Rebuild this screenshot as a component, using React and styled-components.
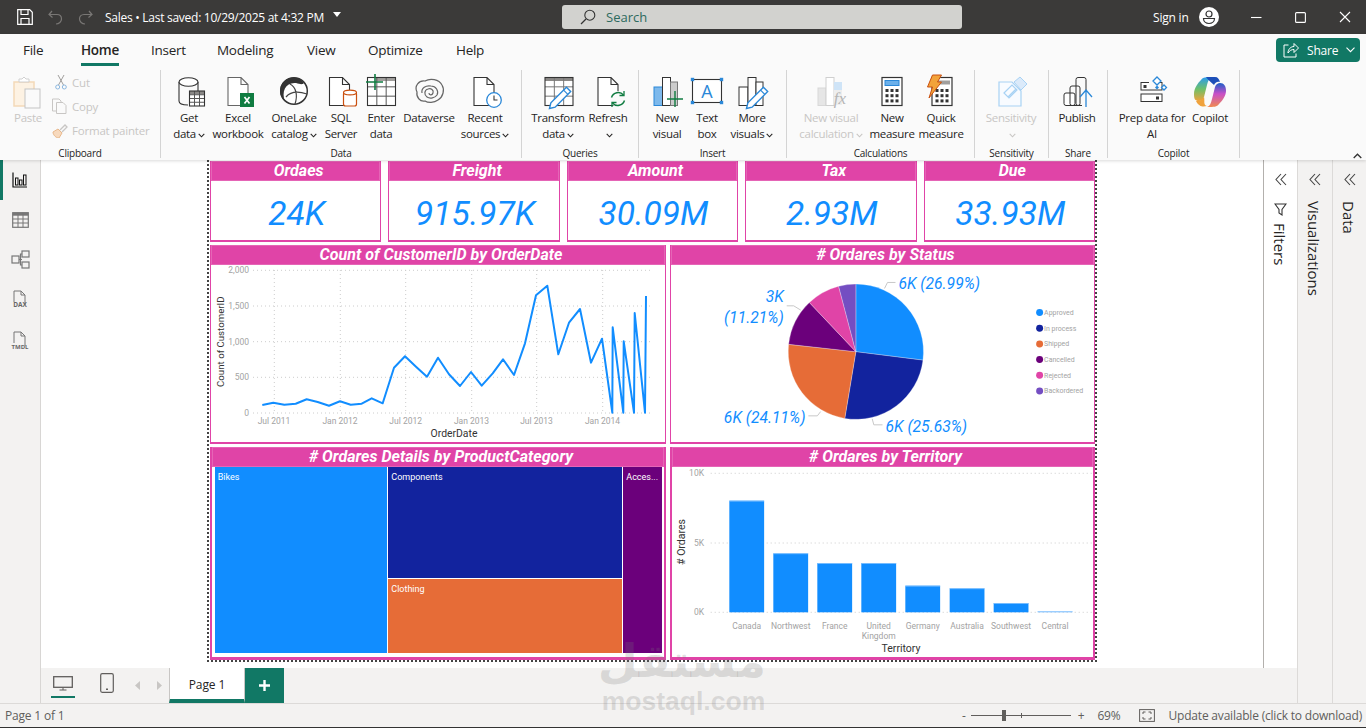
import React from 'react';
import styled, { createGlobalStyle } from 'styled-components';

const Global = createGlobalStyle`
  html, body { margin: 0; padding: 0; background: #f3f2f1; overflow: hidden; }
  * { box-sizing: border-box; }
  #root { width: 1366px; height: 728px; }
`;
const UI = `"Open Sans", "Noto Sans", sans-serif`;
const DIN = `Roboto, "Liberation Sans", sans-serif`;
const PINK = '#E044A7';
const TEAL = '#117865';

const Shell = styled.div`position: relative; width: 1366px; height: 728px; display: flex; flex-direction: column; font-family: ${UI}; overflow: hidden; background: #f3f2f1;`;
const TitleBar = styled.header`height: 34px; background: #3b3a39; display: flex; align-items: center; color: #fff; flex: none;`;
const TitleIcon = styled.svg`flex: none; margin-left: ${p => p.$ml}px; display: block;`;
const TitleText = styled.span`margin-left: 12px; width: 222px; font-size: 12px; letter-spacing: -0.27px; white-space: nowrap;`;
const Caret = styled.span`margin-left: 6px; width: 0; height: 0; border-left: 4.5px solid transparent; border-right: 4.5px solid transparent; border-top: 5px solid #fff; margin-top: -6px;`;
const SearchBox = styled.div`margin-left: 221px; width: 400px; height: 24px; background: #d2d2cf; border-radius: 3px; display: flex; align-items: center; padding-left: 18px; gap: 10px; color: #2d6a5e; font-size: 13px;`;
const SignIn = styled.span`margin-left: 191px; width: 36px; font-size: 12px; letter-spacing: -0.2px; white-space: nowrap;`;

const Ribbon = styled.section`height: 126px; background: #fafafa; flex: none; position: relative; z-index: 2; box-shadow: 0 1px 3px rgba(0,0,0,.15); padding-bottom: 2px;`;
const TabRow = styled.nav`height: 36px; display: flex; align-items: flex-start; padding: 7px 0 0 23px; position: relative;`;
const Tab = styled.span`font-size: 13.5px; letter-spacing: -0.28px; color: #252423; margin-left: ${p => p.$ml}px; height: 22px; line-height: 19px; font-weight: ${p => p.$on ? 600 : 400}; border-bottom: ${p => p.$on ? `3px solid ${TEAL}` : 'none'}; white-space: nowrap; box-sizing: content-box; width: ${p => p.$w}px; text-align: left;`;
const ShareBtn = styled.button`position: absolute; left: 1276px; top: 4px; width: 84px; height: 24px; border: 0; border-radius: 4px; background: ${TEAL}; color: #fff; font: 12px ${UI}; letter-spacing: -0.2px; display: flex; align-items: center; padding: 0 0 0 7px; gap: 8px;`;
const Groups = styled.div`display: flex; height: 88px;`;
const Group = styled.div`width: ${p => p.$w}px; flex: none; border-right: 1px solid #d4d4d4; height: 88px; margin-top: 0; display: flex; flex-direction: column; position: relative; padding-left: ${p => p.$pl}px;`;
const GroupItems = styled.div`display: flex; height: 76px;`;
const GroupLabel = styled.div`position: absolute; left: 0; right: 0; bottom: -2px; text-align: center; font-size: 10px; letter-spacing: -0.22px; color: #252423; line-height: 14px; white-space: nowrap;`;
const BigBtn = styled.div`width: ${p => p.$w}px; flex: none; display: flex; flex-direction: column; align-items: center; padding-top: 6px; color: ${p => p.$off ? '#c8c6c4' : '#252423'};`;
const BigIcon = styled.svg`width: 36px; height: 32px; flex: none; display: block; overflow: visible; margin-bottom: 2px;`;
const BtnText = styled.div`font-size: 11.5px; letter-spacing: -0.3px; line-height: 16px; height: 16px; text-align: center; white-space: nowrap;`;
const Chev = styled.svg`display: inline-block; margin-left: 2px; vertical-align: 0;`;
const SmallCol = styled.div`display: flex; flex-direction: column; margin-left: 2px;`;
const SmallBtn = styled.div`height: 24px; display: flex; align-items: center; font-size: 11.5px; letter-spacing: -0.2px; color: #c8c6c4; white-space: nowrap;`;
const SmallIconBox = styled.span`width: 20px; flex: none; display: flex; align-items: center;`;
const Collapse = styled.svg`position: absolute; right: 4px; bottom: 1px;`;

const Middle = styled.div`flex: 1; display: flex; min-height: 0;`;
const Rail = styled.aside`width: 41px; flex: none; background: #f3f2f1; border-right: 1px solid #d8d6d4; position: relative; display: flex; flex-direction: column; align-items: center; padding-top: 12px;`;
const RailMark = styled.div`position: absolute; left: 0; top: 0; width: 3px; height: 40px; background: ${TEAL};`;
const RailIcon = styled.svg`display: block; margin-bottom: ${p => p.$mb}px; flex: none;`;
const Center = styled.main`width: 1256px; flex: none; display: flex; flex-direction: column;`;
const CanvasRow = styled.div`height: 508px; display: flex; background: #fff;`;
const PageArea = styled.div`flex: 1; padding-left: 166px;`;
const FilterPane = styled.div`width: 34px; flex: none; border-left: 1.5px solid #b3b0ad; background: #fff; display: flex; flex-direction: column; align-items: center; padding-top: 13px;`;
const FilterFunnel = styled.svg`margin-top: 17px; display: block;`;
const Pane = styled.aside`width: ${p => p.$w}px; flex: none; border-left: 1px solid #dcdad8; background: #f3f2f1; display: flex; flex-direction: column; align-items: center; padding-top: 13px;`;
const PaneTitle = styled.div`writing-mode: vertical-rl; font-size: 15px; font-weight: 500; letter-spacing: 0; color: #252423; margin-top: ${p => p.$mt}px; line-height: 16px; margin-right: 2px;`;

const Report = styled.div`width: 890px; height: 502px; border: 2px dotted #444; border-top: 0; padding: 1px 0 0 1px; display: flex; flex-direction: column; gap: 3px; background: #fff; font-family: ${DIN};`;
const KpiRow = styled.div`display: grid; grid-template-columns: repeat(5, 1fr); gap: 7px; width: 885px; height: 81px; flex: none;`;
const Card = styled.div`background: #fff; border: 1px solid ${PINK}; border-top: 0; border-bottom-width: 2px; display: flex; flex-direction: column; min-width: 0;`;
const CardTitle = styled.div`height: 20px; flex: none; background: ${PINK}; color: #fff; text-align: center; font-style: italic; font-weight: 700; font-size: 16px; line-height: 20px; letter-spacing: 0.03px; white-space: nowrap; padding-left: 6px; outline: 1px solid rgba(255,255,255,.18); outline-offset: -1px;`;
const KpiValue = styled.div`flex: 1; display: flex; align-items: center; justify-content: center; color: #118DFF; font-style: italic; font-size: 33.5px; padding: 5px 0 0 2px;`;
const ChartRow = styled.div`display: grid; grid-template-columns: 456px 425px; gap: 4px; width: 885px; height: ${p => p.$h}px; flex: none;`;
const ChartCard = styled(Card)`${p => p.$thick ? 'border-width: 0 2px 3px;' : ''}`;
const ChartSvg = styled.svg`flex: 1; width: 100%; min-height: 0; display: block; font-family: ${DIN};`;
const TreeGrid = styled.div`flex: 1; display: grid; grid-template-columns: 172.6px 234px 38.7px; grid-template-rows: 111px 74px; gap: 1px; padding: 0 0 0 2.7px; align-content: start;`;
const TreeCell = styled.div`background: ${p => p.$c}; grid-row: ${p => p.$rows}; color: #fff; font-size: 9px; font-family: ${DIN}; padding: 5px 3px; line-height: 11px; overflow: hidden; white-space: nowrap;`;

const TabBar = styled.div`height: 35px; background: #f3f2f1; display: flex; position: relative; flex: none;`;
const DeviceBtn = styled.div`width: ${p => p.$w}px; margin-left: ${p => p.$ml}px; height: 30px; display: flex; justify-content: center; padding-top: ${p => p.$pt}px; border-bottom: ${p => p.$on ? `2px solid ${TEAL}` : 'none'}; flex: none;`;
const Nav = styled.div`display: flex; gap: 17px; margin-left: 21px; padding-top: 13px; width: 34px; flex: none;`;
const PageTab = styled.div`width: 76px; height: 35px; background: #fff; border-left: 1px solid #c8c6c4; border-right: 1px solid #c8c6c4; border-bottom: 4px solid ${TEAL}; font-size: 12px; letter-spacing: -0.1px; color: #252423; display: flex; align-items: center; justify-content: center; padding-top: 2px; margin-left: 0; flex: none;`;
const AddTab = styled.div`width: 39px; height: 35px; background: ${TEAL}; display: flex; align-items: center; justify-content: center; flex: none;`;
const StatusBar = styled.footer`height: 25px; flex: none; background: #f3f2f1; border-top: 1px solid #dcdad8; border-bottom: 1px solid #333; display: flex; align-items: center; font-size: 12px; color: #605e5c; letter-spacing: -0.18px; padding-left: 5px; position: relative; z-index: 1;`;
const Zoom = styled.div`margin-left: auto; display: flex; align-items: center; height: 100%;`;
const Slider = styled.div`position: relative; width: 100px; height: 1px; background: #605e5c; margin: 0 7px 0 5px;`;
const Thumb = styled.span`position: absolute; left: 31px; top: -5px; width: 4px; height: 11px; background: #605e5c;`;
const Tick = styled.span`position: absolute; left: 50px; top: -2px; width: 1px; height: 5px; background: #605e5c;`;
const Pct = styled.span`margin: 0 18px 0 13px;`;
const Update = styled.span`margin: 0 4px 0 14px; letter-spacing: -0.2px;`;
const Mark = styled.div`position: absolute; left: 601px; top: ${p => p.$t}px; width: 165px; text-align: center; color: rgba(120,120,120,.22); font-weight: 700; z-index: 5; pointer-events: none; white-space: nowrap; font-family: ${p => p.$f}; font-size: ${p => p.$s}px; line-height: ${p => p.$l}px;`;

const s = { fill: 'none', stroke: '#333', strokeWidth: 1.1 };
const Ic = ({ children }) => <BigIcon viewBox="0 0 36 32">{children}</BigIcon>;
const Grid = ({ x, y, w, h, c = 3, r = 3, stroke = '#555' }) => {
  const lines = [];
  for (let i = 1; i < c; i++) lines.push(<path key={'c' + i} d={`M${x + (w * i) / c} ${y}v${h}`} stroke={stroke} strokeWidth="1" />);
  for (let i = 1; i < r; i++) lines.push(<path key={'r' + i} d={`M${x} ${y + (h * i) / r}h${w}`} stroke={stroke} strokeWidth="1" />);
  return <g>{lines}<rect x={x} y={y} width={w} height={h} fill="none" stroke="#333" strokeWidth="1.1" /></g>;
};
const Doc = ({ x = 8, w = 20, y = 1.5, h = 28, stroke = '#333' }) => (
  <path d={`M${x} ${y}h${w - 7}l7 7v${h - 7}h-${w}z M${x + w - 7} ${y}v7h7`} fill="#fff" stroke={stroke} strokeWidth="1.1" />
);
const Pencil = ({ x, y }) => (
  <g transform={`translate(${x} ${y}) rotate(45)`}>
    <path d="M-3 -22h6v22l-3 5-3-5z" fill="#fff" stroke="#2b88d8" strokeWidth="1.4" />
    <path d="M-3 -18h6" stroke="#2b88d8" strokeWidth="1.2" />
  </g>
);
const Calc = ({ x, w = 20 }) => (
  <g>
    <rect x={x} y="1.5" width={w} height="28" fill="#fff" stroke="#333" strokeWidth="1.2" />
    {[0, 1, 2].map(r => [0, 1, 2].map(c => <rect key={r + '' + c} x={x + 3.5 + c * 5} y={13 + r * 5.2} width="3" height="3" fill="#333" />))}
  </g>
);

const I = {
  paste: <Ic>
    <rect x="4" y="6" width="20" height="24" fill="#fdf2e3" stroke="#f3d9b8" strokeWidth="1.5" />
    <path d="M9 6V3h3l2-2 2 2h3v3z" fill="#fff" stroke="#d0d0d0" />
    <rect x="15" y="13" width="15" height="19" fill="#fafafa" stroke="#c4c4c4" />
  </Ic>,
  getData: <Ic>
    <path d="M8 6v19c0 2.7 4 4 9 4 M27 6v9" {...s} />
    <ellipse cx="17.5" cy="6" rx="9.5" ry="4.2" fill="#fff" stroke="#333" strokeWidth="1.1" />
    <rect x="18.5" y="15" width="15" height="15" fill="#fff" />
    <rect x="18.5" y="15" width="15" height="3.5" fill="#8a8886" />
    <Grid x={18.5} y={15} w={15} h={15} c={3} r={4} />
  </Ic>,
  excel: <Ic>
    <Doc x={8} w={20} stroke="#666" />
    <rect x="20" y="17" width="14" height="14" fill="#107c41" />
    <path d="M24.5 21l5 6.5 M29.5 21l-5 6.5" stroke="#fff" strokeWidth="1.7" />
  </Ic>,
  onelake: <Ic>
    <circle cx="18" cy="15" r="13.3" fill="#fff" stroke="#333" strokeWidth="1.5" />
    <path d="M18 1.500A13.500 13.500 0 0 0 9 25.500C5 15 10 6 20 7c4 1 6 2 8 0A13.500 13.500 0 0 0 18 1.500z" fill="#333" />
    <path d="M14 8c6 3 8 11 5 20 M10 21c5-6 12-6 21-3" fill="none" stroke="#444" strokeWidth="1.2" />
  </Ic>,
  sql: <Ic>
    <Doc x={6.5} w={20} />
    <rect x="20.5" y="16" width="13" height="14" rx="2" fill="#fff" stroke="#ca5010" strokeWidth="1.2" />
    <ellipse cx="27" cy="16.5" rx="6.5" ry="2.4" fill="#fff" stroke="#ca5010" strokeWidth="1.2" />
  </Ic>,
  enter: <Ic>
    <rect x="4.5" y="1.5" width="28" height="28" fill="#fff" />
    <rect x="13" y="1.5" width="19.5" height="3.5" fill="#a19f9d" />
    <Grid x={4.5} y={1.5} w={28} h={28} c={3} r={3} />
    <path d="M12 -2v16 M3 6h17" stroke="#107c41" strokeWidth="1.6" />
  </Ic>,
  dataverse: <Ic>
    <path d="M6 16c-3-6 2-12 8-11 5-3 14-2 17 4 3 5 1 12-4 15-4 3-10 3-13 1-5 1-9-4-8-9z" fill="none" stroke="#666" strokeWidth="1.2" />
    <path d="M11 17c-1-5 4-8 9-7 5 0 8 5 6 9-2 3-7 4-10 2-3-2-3-7 1-8 3-1 6 1 5 4s-4 2-4 0" fill="none" stroke="#666" strokeWidth="1.2" />
  </Ic>,
  recent: <Ic>
    <Doc x={7} w={20} />
    <circle cx="27" cy="24" r="7.3" fill="#fff" stroke="#2b88d8" strokeWidth="1.3" />
    <path d="M27 19.5V24h3.5" fill="none" stroke="#333" strokeWidth="1.1" />
  </Ic>,
  transform: <Ic>
    <rect x="5" y="1.5" width="28" height="28" fill="#fff" />
    <rect x="5" y="1.5" width="28" height="3.5" fill="#8a8886" />
    <Grid x={5} y={1.5} w={28} h={28} c={3} r={3} stroke="#777" />
    <Pencil x={13} y={29} />
  </Ic>,
  refresh: <Ic>
    <Doc x={8} w={20} />
    <circle cx="28" cy="23" r="8" fill="#fafafa" />
    <path d="M21.5 21.5a7 7 0 0 1 12-2.5 M34.5 24.500a7 7 0 0 1-12 2.500" fill="none" stroke="#107c41" strokeWidth="1.4" />
    <path d="M34 15v4.500h-4.500 M22 31v-4.500h4.500" fill="none" stroke="#107c41" strokeWidth="1.3" />
  </Ic>,
  newVisual: <Ic>
    <rect x="5" y="11" width="8.500" height="18.500" fill="#7db9ec" stroke="#2b88d8" />
    <rect x="13.500" y="1.500" width="8" height="28" fill="#fff" stroke="#333" />
    <rect x="21.500" y="6" width="7" height="23.500" fill="#ccc" stroke="#777" />
    <path d="M26 15v16 M18 23h16" stroke="#107c41" strokeWidth="1.4" />
  </Ic>,
  textbox: <Ic>
    <rect x="3.500" y="3.500" width="29" height="23" fill="#fff" stroke="#333" strokeWidth="1.1" />
    {[[3.5, 3.5], [32.5, 3.5], [3.5, 26.5], [32.5, 26.5]].map(([x, y]) => <rect key={x + '' + y} x={x - 1.7} y={y - 1.7} width="3.4" height="3.4" fill="#2b88d8" />)}
    <text x="18" y="22" fontSize="18" fill="#2b88d8" textAnchor="middle" fontFamily={UI}>A</text>
  </Ic>,
  moreVisuals: <Ic>
    <rect x="5" y="11" width="9" height="18.500" fill="#fff" stroke="#333" />
    <rect x="14" y="1.500" width="8" height="28" fill="#fff" stroke="#333" />
    <rect x="22" y="6" width="7" height="23.500" fill="#fff" stroke="#333" />
    <Pencil x={16} y={29} />
  </Ic>,
  calcVisual: <Ic>
    <rect x="5" y="12" width="8" height="17.500" fill="#e6e6e6" stroke="#d8d8d8" />
    <rect x="13" y="1.500" width="8" height="28" fill="#fff" stroke="#cfcfcf" />
    <rect x="21" y="6" width="8" height="8" fill="#cfe4f7" />
    <rect x="21" y="14" width="8" height="15" fill="#eee" />
    <text x="27" y="28" fontSize="17" fontStyle="italic" fontFamily='"Liberation Serif", serif' fill="#b5b5b5" textAnchor="middle">fx</text>
  </Ic>,
  measure: <Ic>
    <Calc x={8} />
    <rect x="11" y="4.500" width="14" height="5" fill="#6cb0ea" stroke="#2b88d8" />
  </Ic>,
  quick: <Ic>
    <Calc x={9} w={20} />
    <rect x="14" y="4.500" width="13" height="4" fill="#a19f9d" />
    <path d="M9.500 -1h9l-4 7h4L6 22l3.500-11H4.500z" fill="#f2a33a" stroke="#ca5010" strokeWidth="1" />
  </Ic>,
  sensitivity: <Ic>
    <path d="M6 6h13l9 9v15H6z" fill="#f8fbff" stroke="#a8d2f4" strokeWidth="1.2" />
    <path d="M11 17l8-8 5 5-8 8z M15 21l8-8" fill="none" stroke="#a8d2f4" strokeWidth="1.2" />
    <path d="M21 6l6-5 7 7-6 6z" fill="#dbeafa" stroke="#a8d2f4" />
  </Ic>,
  publish: <Ic>
    <rect x="5" y="17" width="11" height="12.500" rx="2" fill="#fff" stroke="#333" />
    <rect x="11" y="10" width="10" height="19.500" rx="2" fill="none" stroke="#333" />
    <rect x="17" y="1.500" width="10" height="28" rx="2" fill="none" stroke="#333" />
    <rect x="23" y="14" width="10" height="17" fill="#fafafa" />
    <path d="M27 31V14 M21 21l6-7 6 7" fill="none" stroke="#2b88d8" strokeWidth="1.3" />
  </Ic>,
  prep: <Ic>
    <rect x="7" y="6.500" width="21" height="7.500" fill="#fff" stroke="#333" />
    <rect x="9.500" y="9" width="3" height="3" fill="#333" />
    <rect x="7" y="18" width="21" height="7.500" fill="#fff" stroke="#333" />
    <rect x="22" y="20.500" width="3" height="3" fill="#333" />
    <rect x="15" y="1" width="11" height="12" fill="#fafafa" />
    <path d="M23 1l4 4-4 4-4-4z M30 9l2.500 2.500-2.500 2.500-2.500-2.500z" fill="#fff" stroke="#2b88d8" strokeWidth="1.3" />
    <path d="M21 11.500l2-2 2 2-2 2z" fill="#2b88d8" />
  </Ic>,
  copilot: <BigIcon viewBox="0 0 36 32">
    <defs>
      <linearGradient id="cpA" x1="0" y1="0" x2="0" y2="1"><stop offset="0" stopColor="#2a9bf0" /><stop offset=".5" stopColor="#6cc06a" /><stop offset="1" stopColor="#f0a23c" /></linearGradient>
      <linearGradient id="cpB" x1="0" y1="0" x2="0" y2="1"><stop offset="0" stopColor="#1d5fc8" /><stop offset=".45" stopColor="#c84fc8" /><stop offset="1" stopColor="#f08a50" /></linearGradient>
    </defs>
    <path d="M9 4c2-3 5-3 11-3-3 1-4 4-5 8l-3 12c-1 3-3 4-5 4-4 0-5-2-5-7 0-6 4-11 7-14z" fill="url(#cpA)" />
    <path d="M27 28c-2 3-5 3-12 3 3-1 4-4 5-8l3-12c1-3 3-4 5-4 4 0 6 3 6 8 0 5-4 10-7 13z" fill="url(#cpB)" />
    <path d="M12 21c1 4-1 8 3 9-4 1-8 1-11-5 3 0 6-1 8-4z" fill="#f0a23c" />
    <path d="M14 1h9c3 0 4 2 5 5-3-1-5 1-6 3-2-2-5-4-8-8z" fill="#1c4fb8" />
  </BigIcon>,
};

const Chevron = ({ c = 'currentColor' }) => (
  <Chev width="7" height="5" viewBox="0 0 7 5"><path d="M.7.8L3.500 3.800 6.300.8" fill="none" stroke={c} strokeWidth="1.1" /></Chev>
);
const Big = ({ w, icon, l1, l2, chev, off }) => (
  <BigBtn $w={w} $off={off}>
    {icon}
    <BtnText>{l1}</BtnText>
    <BtnText>{l2}{chev && <Chevron />}</BtnText>
  </BigBtn>
);

const tabs = [['File', 0, 20], ['Home', 38, 38], ['Insert', 32, 34], ['Modeling', 32, 58], ['View', 32, 30], ['Optimize', 31, 56], ['Help', 32, 28]];

const linePts = [[187,750],[220,743],[253,749],[287,746],[320,733],[353,741],[387,752],[420,739],[452,749],[485,746],[515,730],[548,745],[582,638],[615,604],[648,635],[681,665],[714,608],[747,658],[780,693],[813,651],[845,692],[878,655],[909,613],[942,660],[975,565],[1008,421],[1042,392],[1075,598],[1107,503],[1140,462],[1173,623],[1206,551],[1237,773],[1238,517],[1270,773],[1271,559],[1302,773],[1304,474],[1335,773],[1338,423]]
  .map(([x, y]) => `${(200 + x / 3).toFixed(1)},${(155 + y / 3).toFixed(1)}`).join(' ');
const GRAY = '#a3a3a3';
const LineChart = () => (
  <ChartSvg viewBox="211 265 454 177">
    {[270.3, 306, 341.7, 377.3, 413].map(y => <path key={y} d={`M253 ${y}H653`} stroke="#ccc" strokeWidth="1" strokeDasharray="1 3" />)}
    {[274.3, 340.3, 405.7, 471.7, 536.7, 602.7].map(x => <path key={x} d={`M${x} 270V413`} stroke="#ccc" strokeWidth="1" strokeDasharray="1 3" />)}
    {[['2,000', 270.300], ['1,500', 306], ['1,000', 341.700], ['500', 377.300], ['0', 413]].map(([t, y]) => <text key={t} x="249" y={y + 3} textAnchor="end" fontSize="8.500" fill={GRAY}>{t}</text>)}
    {[['Jul 2011', 274], ['Jan 2012', 340], ['Jul 2012', 405.700], ['Jan 2013', 471.500], ['Jul 2013', 536.500], ['Jan 2014', 602.500]].map(([t, x]) => <text key={t} x={x} y="424" textAnchor="middle" fontSize="8.500" fill={GRAY}>{t}</text>)}
    <text x="454" y="437" textAnchor="middle" fontSize="10.400" fill="#333">OrderDate</text>
    <text transform="translate(223.500 341.700) rotate(-90)" textAnchor="middle" fontSize="9.700" fill="#333">Count of CustomerID</text>
    <polyline points={linePts} fill="none" stroke="#118DFF" strokeWidth="2" strokeLinejoin="round" />
  </ChartSvg>
);

const slices = [[26.99, '#118DFF', 'Approved'], [25.63, '#12239E', 'In process'], [24.11, '#E66C37', 'Shipped'], [11.21, '#6B007B', 'Cancelled'], [7.96, '#E044A7', 'Rejected'], [4.1, '#744EC2', 'Backordered']];
const CX = 855.300, CY = 351.700, R = 67.800;
const pieArcs = (() => {
  let a = 0;
  return slices.map(([p, c]) => {
    const a0 = a; a += p * 3.6;
    const pt = t => [CX + R * Math.sin(t * Math.PI / 180), CY - R * Math.cos(t * Math.PI / 180)];
    const [x0, y0] = pt(a0), [x1, y1] = pt(a);
    return { c, d: `M${CX} ${CY}L${x0} ${y0}A${R} ${R} 0 ${p > 50 ? 1 : 0} 1 ${x1} ${y1}Z` };
  });
})();
const pieLabel = { fontSize: 15.700, fontStyle: 'italic', fill: '#118DFF' };
const leaders = ['M884 288.300L887 282.300H895', 'M800 310L793 305.700H786', 'M820 411.700L816.700 416H807.700', 'M871.700 419L873.300 425H882'];
const PieChart = () => (
  <ChartSvg viewBox="670 265 424 177">
    {leaders.map(d => <path key={d} d={d} fill="none" stroke="#c8c8c8" strokeWidth="1" />)}
    {pieArcs.map(a => <path key={a.c} d={a.d} fill={a.c} stroke="#fff" strokeOpacity=".45" strokeWidth=".6" />)}
    <text x="898" y="289" {...pieLabel}>6K (26.99%)</text>
    <text x="783" y="302" textAnchor="end" {...pieLabel}>3K</text>
    <text x="783" y="323" textAnchor="end" {...pieLabel}>(11.21%)</text>
    <text x="723" y="423" {...pieLabel}>6K (24.11%)</text>
    <text x="885" y="432" {...pieLabel}>6K (25.63%)</text>
    {slices.map(([, c, n], i) => (
      <g key={n}>
        <circle cx="1039.500" cy={312.500 + i * 15.700} r="3.500" fill={c} />
        <text x="1044" y={315 + i * 15.700} fontSize="7" fill="#a3a3a3">{n}</text>
      </g>
    ))}
  </ChartSvg>
);

const bars = [['Canada', 193, 182], ['Northwest', 325, 340], ['France', 457, 369], ['United', 589, 369, 'Kingdom'], ['Germany', 721, 437], ['Australia', 854, 445], ['Southwest', 986, 489], ['Central', 1118, 514]];
const BarChart = () => (
  <ChartSvg viewBox="672 467 421 190">
    {[[473.300, '10K'], [543, '5K'], [612.300, '0K']].map(([y, t]) => (
      <g key={t}>
        <path d={`M710.700 ${y}H1091.700`} stroke="#ccc" strokeDasharray="1 3" />
        <text x="704" y={y + 3} textAnchor="end" fontSize="8.500" fill={GRAY}>{t}</text>
      </g>
    ))}
    {bars.map(([t, x, top, t2], i) => {
      const px = 665 + x / 3, y = 440 + top / 3, cx = px + 17.400;
      return (
        <g key={t}>
          <rect x={px} y={y} width="34.800" height={612.300 - y} fill={i === 7 ? '#8fc8ff' : '#118DFF'} />
          <rect x={px} y={y} width="34.800" height=".8" fill="#8fc8ff" />
          <text x={cx} y="629" textAnchor="middle" fontSize="8.500" fill={GRAY}>{t}</text>
          {t2 && <text x={cx} y="639" textAnchor="middle" fontSize="8.500" fill={GRAY}>{t2}</text>}
        </g>
      );
    })}
    <text x="901" y="651.500" textAnchor="middle" fontSize="10.500" fill="#333">Territory</text>
    <text transform="translate(685 542) rotate(-90)" textAnchor="middle" fontSize="10.500" fill="#333">{'# Ordares'}</text>
  </ChartSvg>
);

const kpis = [['Ordaes', '24K'], ['Freight', '915.97K'], ['Amount', '30.09M'], ['Tax', '2.93M'], ['Due', '33.93M']];
const DoubleChev = () => (
  <svg width="12" height="13" viewBox="0 0 12 13"><path d="M6 1L1 6.500 6 12 M11 1L6 6.500 11 12" fill="none" stroke="#444" strokeWidth="1.1" /></svg>
);

export default function App() {
  return (
    <Shell>
      <Global />
      <TitleBar>
        <TitleIcon $ml={17} width="16" height="16" viewBox="0 0 16 16"><path d="M.7.700h12l2.600 2.600v12H.700z M4 .7v4.800h7V.7 M4 15V9.500h8V15" fill="none" stroke="#fff" strokeWidth="1.200" /></TitleIcon>
        <TitleIcon $ml={15} width="15" height="15" viewBox="0 0 15 15"><path d="M4 1L1 4.500l3.500 3 M1.500 4.500H9c3 0 4.500 2 4.500 4.500S11 14 8 14" fill="none" stroke="#797775" strokeWidth="1.200" /></TitleIcon>
        <TitleIcon $ml={15} width="15" height="15" viewBox="0 0 15 15"><path d="M11 1l3 3.500-3.500 3 M13.500 4.500H6C3 4.500 1.500 6.500 1.500 9S4 14 7 14" fill="none" stroke="#797775" strokeWidth="1.200" /></TitleIcon>
        <TitleText>Sales • Last saved: 10/29/2025 at 4:32 PM</TitleText>
        <Caret />
        <SearchBox>
          <svg width="16" height="16" viewBox="0 0 16 16"><circle cx="9.800" cy="6.200" r="5" fill="none" stroke="#333" strokeWidth="1.100" /><path d="M6 10L1 15" stroke="#333" strokeWidth="1.200" /></svg>
          Search
        </SearchBox>
        <SignIn>Sign in</SignIn>
        <TitleIcon $ml={10} width="20" height="20" viewBox="0 0 20 20"><circle cx="10" cy="10" r="10" fill="#fff" /><circle cx="10" cy="7" r="3" fill="none" stroke="#333" strokeWidth="1.200" /><path d="M4.500 11.500h11c0 3-2.500 5-5.500 5s-5.500-2-5.500-5z" fill="none" stroke="#333" strokeWidth="1.200" /></TitleIcon>
        <TitleIcon $ml={32} width="11" height="11" viewBox="0 0 11 11"><path d="M0 5.500h10.500" stroke="#fff" strokeWidth="1.100" /></TitleIcon>
        <TitleIcon $ml={33} width="11" height="11" viewBox="0 0 11 11"><rect x=".6" y=".6" width="9.800" height="9.800" rx="1" fill="none" stroke="#fff" strokeWidth="1.100" /></TitleIcon>
        <TitleIcon $ml={33} width="12" height="12" viewBox="0 0 12 12"><path d="M1 1l10 10M11 1L1 11" stroke="#fff" strokeWidth="1.100" /></TitleIcon>
      </TitleBar>

      <Ribbon>
        <TabRow>
          {tabs.map(([t, ml, w]) => <Tab key={t} $ml={ml} $w={w} $on={t === 'Home'}>{t}</Tab>)}
          <ShareBtn>
            <svg width="16" height="16" viewBox="0 0 16 16"><path d="M5.500 3H1v12h12v-3.500" fill="none" stroke="#fff" /><path d="M5 11c0-4 3-6.500 6-6.500V1.500l4.500 4.500L11 10.500V7.500C8.500 7.500 6.500 8.500 5 11z" fill="none" stroke="#fff" /></svg>
            Share
            <svg width="9" height="6" viewBox="0 0 9 6"><path d="M.5.700L4.500 4.700 8.500.700" fill="none" stroke="#fff" strokeWidth="1.100" /></svg>
          </ShareBtn>
        </TabRow>
        <Groups>
          <Group $w={161} $pl={6}>
            <GroupItems>
              <Big w={44} icon={I.paste} l1="Paste" off />
              <SmallCol>
                <SmallBtn>
                  <SmallIconBox><svg width="12" height="16" viewBox="0 0 12 16" style={{ marginLeft: 3 }}><path d="M3 1l5.500 10M9 1L3.500 11" fill="none" stroke="#a19f9d" /><circle cx="2.700" cy="13" r="2" fill="none" stroke="#8cb8e0" /><circle cx="9.300" cy="13" r="2" fill="none" stroke="#8cb8e0" /></svg></SmallIconBox>
                  Cut
                </SmallBtn>
                <SmallBtn>
                  <SmallIconBox><svg width="15" height="16" viewBox="0 0 15 16"><path d="M.5 1H7l2 2v10H.5z" fill="none" stroke="#c8c6c4" /><path d="M4.500 4.500H11l3 3V15.500H4.500z" fill="#fafafa" stroke="#c8c6c4" /></svg></SmallIconBox>
                  Copy
                </SmallBtn>
                <SmallBtn>
                  <SmallIconBox><svg width="16" height="15" viewBox="0 0 16 15"><path d="M1 9l5-3 4 4-3 5C4 15 1 12 1 9z" fill="#f7d9bd" stroke="#e8b88c" /><path d="M8 7l5-5 2 2-5 5" fill="none" stroke="#c8c6c4" strokeWidth="1.300" /></svg></SmallIconBox>
                  Format painter
                </SmallBtn>
              </SmallCol>
            </GroupItems>
            <GroupLabel>Clipboard</GroupLabel>
          </Group>
          <Group $w={361} $pl={9}>
            <GroupItems>
              <Big w={38} icon={I.getData} l1="Get" l2="data" chev />
              <Big w={60} icon={I.excel} l1="Excel" l2="workbook" />
              <Big w={52} icon={I.onelake} l1="OneLake" l2="catalog" chev />
              <Big w={42} icon={I.sql} l1="SQL" l2="Server" />
              <Big w={38} icon={I.enter} l1="Enter" l2="data" />
              <Big w={58} icon={I.dataverse} l1="Dataverse" />
              <Big w={54} icon={I.recent} l1="Recent" l2="sources" chev />
            </GroupItems>
            <GroupLabel>Data</GroupLabel>
          </Group>
          <Group $w={117} $pl={7}>
            <GroupItems>
              <Big w={58} icon={I.transform} l1="Transform" l2="data" chev />
              <Big w={42} icon={I.refresh} l1="Refresh" l2="" chev />
            </GroupItems>
            <GroupLabel>Queries</GroupLabel>
          </Group>
          <Group $w={148} $pl={8}>
            <GroupItems>
              <Big w={40} icon={I.newVisual} l1="New" l2="visual" />
              <Big w={40} icon={I.textbox} l1="Text" l2="box" />
              <Big w={50} icon={I.moreVisuals} l1="More" l2="visuals" chev />
            </GroupItems>
            <GroupLabel>Insert</GroupLabel>
          </Group>
          <Group $w={188} $pl={9}>
            <GroupItems>
              <Big w={70} icon={I.calcVisual} l1="New visual" l2="calculation" chev off />
              <Big w={52} icon={I.measure} l1="New" l2="measure" />
              <Big w={46} icon={I.quick} l1="Quick" l2="measure" />
            </GroupItems>
            <GroupLabel>Calculations</GroupLabel>
          </Group>
          <Group $w={74} $pl={6}>
            <GroupItems>
              <Big w={60} icon={I.sensitivity} l1="Sensitivity" l2="" chev off />
            </GroupItems>
            <GroupLabel>Sensitivity</GroupLabel>
          </Group>
          <Group $w={59} $pl={4}>
            <GroupItems>
              <Big w={48} icon={I.publish} l1="Publish" />
            </GroupItems>
            <GroupLabel>Share</GroupLabel>
          </Group>
          <Group $w={132} $pl={5}>
            <GroupItems>
              <Big w={78} icon={I.prep} l1="Prep data for" l2="AI" />
              <Big w={38} icon={I.copilot} l1="Copilot" />
            </GroupItems>
            <GroupLabel>Copilot</GroupLabel>
          </Group>
        </Groups>
        <Collapse width="9" height="6" viewBox="0 0 9 6"><path d="M.7 5L4.500 1.200 8.300 5" fill="none" stroke="#333" strokeWidth="1.300" /></Collapse>
      </Ribbon>

      <Middle>
        <Rail>
          <RailMark />
          <RailIcon $mb={24} width="16" height="16" viewBox="0 0 16 16"><path d="M1 .5V15h14" fill="none" stroke="#111" strokeWidth="1.200" /><rect x="3.500" y="6" width="2.500" height="7" fill="none" stroke="#111" /><rect x="7.500" y="8" width="2.500" height="5" fill="none" stroke="#111" /><rect x="11.500" y="3" width="2.500" height="10" fill="none" stroke="#111" /></RailIcon>
          <RailIcon $mb={22} width="17" height="16" viewBox="0 0 17 16"><rect x=".7" y=".7" width="15.600" height="14.600" fill="none" stroke="#777" strokeWidth="1.200" /><rect x=".7" y=".7" width="15.600" height="3" fill="#777" /><path d="M.7 7h15.600M.7 11h15.600M6 .7v14.600M11 .7v14.600" stroke="#777" /></RailIcon>
          <RailIcon $mb={21} width="19" height="19" viewBox="0 0 19 19"><g fill="none" stroke="#777" strokeWidth="1.200"><rect x="1" y="6" width="7" height="7" /><rect x="11" y="1" width="7" height="6" /><rect x="11" y="12" width="7" height="6" /><path d="M8 9.500h3 M11 4H9.500v11H11" /></g></RailIcon>
          <RailIcon $mb={21} width="22" height="20" viewBox="0 0 22 20"><path d="M5 12V1h7l4 4v10" fill="none" stroke="#777" /><path d="M12 1v4h4" fill="none" stroke="#777" /><text x="11" y="17" fontSize="6.500" textAnchor="middle" fill="#666" fontWeight="700" fontFamily={UI}>DAX</text></RailIcon>
          <RailIcon $mb={0} width="22" height="20" viewBox="0 0 22 20"><path d="M5 12V1h7l4 4v10" fill="none" stroke="#777" /><path d="M12 1v4h4" fill="none" stroke="#777" /><text x="11" y="18" fontSize="6" textAnchor="middle" fill="#666" fontWeight="700" fontFamily={UI}>TMDL</text></RailIcon>
        </Rail>
        <Center>
          <CanvasRow>
            <PageArea>
              <Report>
                <KpiRow>
                  {kpis.map(([t, v]) => (
                    <Card key={t}>
                      <CardTitle>{t}</CardTitle>
                      <KpiValue>{v}</KpiValue>
                    </Card>
                  ))}
                </KpiRow>
                <ChartRow $h={199}>
                  <ChartCard><CardTitle>Count of CustomerID by OrderDate</CardTitle><LineChart /></ChartCard>
                  <ChartCard><CardTitle># Ordares by Status</CardTitle><PieChart /></ChartCard>
                </ChartRow>
                <ChartRow $h={213}>
                  <ChartCard $thick>
                    <CardTitle># Ordares Details by ProductCategory</CardTitle>
                    <TreeGrid>
                      <TreeCell $c="#118DFF" $rows="1 / 3">Bikes</TreeCell>
                      <TreeCell $c="#12239E" $rows="1">Components</TreeCell>
                      <TreeCell $c="#6B007B" $rows="1 / 3">Acces...</TreeCell>
                      <TreeCell $c="#E66C37" $rows="2">Clothing</TreeCell>
                    </TreeGrid>
                  </ChartCard>
                  <ChartCard $thick><CardTitle># Ordares by Territory</CardTitle><BarChart /></ChartCard>
                </ChartRow>
              </Report>
            </PageArea>
            <FilterPane>
              <DoubleChev />
              <FilterFunnel width="13" height="13" viewBox="0 0 13 13"><path d="M1 1h11L8 6.500V12L5 10V6.500z" fill="none" stroke="#333" strokeWidth="1.100" /></FilterFunnel>
              <PaneTitle $mt={7}>Filters</PaneTitle>
            </FilterPane>
          </CanvasRow>
          <TabBar>
            <DeviceBtn $w={24} $ml={10} $pt={8} $on>
              <svg width="20" height="15" viewBox="0 0 20 15"><rect x=".7" y=".7" width="18.600" height="10.600" fill="none" stroke="#605e5c" strokeWidth="1.300" /><path d="M10 11.500V14M6.500 14h7" stroke="#605e5c" /></svg>
            </DeviceBtn>
            <DeviceBtn $w={14} $ml={25} $pt={5}>
              <svg width="14" height="20" viewBox="0 0 14 20"><rect x=".7" y=".7" width="12.600" height="18.600" rx="1.500" fill="none" stroke="#605e5c" strokeWidth="1.200" /><rect x="6" y="15.500" width="2" height="1.500" fill="#605e5c" /></svg>
            </DeviceBtn>
            <Nav>
              <svg width="5" height="9" viewBox="0 0 5 9"><path d="M5 0v9L0 4.500z" fill="#c8c6c4" /></svg>
              <svg width="5" height="9" viewBox="0 0 5 9"><path d="M0 0v9l5-4.500z" fill="#c8c6c4" /></svg>
            </Nav>
            <PageTab>Page 1</PageTab>
            <AddTab>
              <svg width="11" height="11" viewBox="0 0 11 11"><path d="M5.500 0v11M0 5.500h11" stroke="#fff" strokeWidth="2.400" /></svg>
            </AddTab>
          </TabBar>
        </Center>
        <Pane $w={35}>
          <DoubleChev />
          <PaneTitle $mt={15}>Visualizations</PaneTitle>
        </Pane>
        <Pane $w={35}>
          <DoubleChev />
          <PaneTitle $mt={15}>Data</PaneTitle>
        </Pane>
      </Middle>

      <StatusBar>
        Page 1 of 1
        <Zoom>
          <span>-</span>
          <Slider><Thumb /><Tick /></Slider>
          <span>+</span>
          <Pct>69%</Pct>
          <svg width="16" height="13" viewBox="0 0 16 13"><rect x=".6" y=".6" width="14.800" height="11.800" fill="none" stroke="#605e5c" /><path d="M4 5V3h2.500M12 5V3H9.500M4 8v2h2.500M12 8v2H9.500" fill="none" stroke="#605e5c" /></svg>
          <Update>Update available (click to download)</Update>
        </Zoom>
      </StatusBar>

      <Mark $t={634} $f={`"DejaVu Sans", sans-serif`} $s={46} $l={54} dir="rtl">مستقل</Mark>
      <Mark $t={689} $f={`"Liberation Sans", sans-serif`} $s={26.5} $l={24}>mostaql.com</Mark>
    </Shell>
  );
}
